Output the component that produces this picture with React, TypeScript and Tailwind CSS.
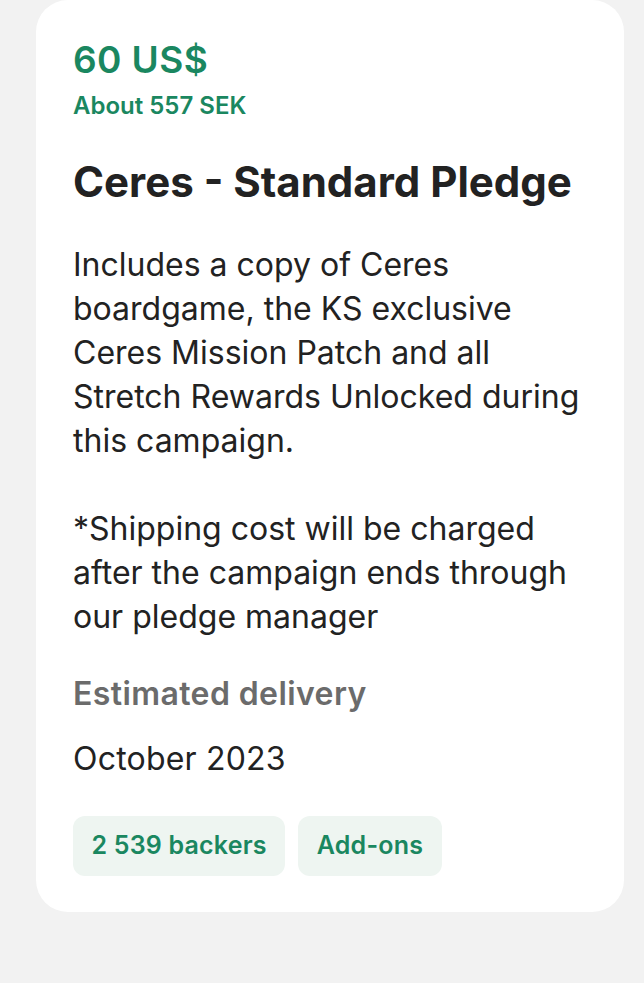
import React from "react";

const bodyLines1 = [
  "Includes a copy of Ceres",
  "boardgame, the KS exclusive",
  "Ceres Mission Patch and all",
  "Stretch Rewards Unlocked during",
  "this campaign.",
];
const bodyLines2 = [
  "*Shipping cost will be charged",
  "after the campaign ends through",
  "our pledge manager",
];

export default function App() {
  return (
    <div
      className="min-h-[983px] w-full bg-[#f2f2f2]"
      style={{ fontFamily: "Inter, 'Noto Sans', sans-serif" }}
    >
      <div className="ml-[36px] mr-[20px] rounded-[32px] bg-white px-[37px] pb-[36px] pt-[38px]">
        <div className="text-[37px] font-semibold leading-[44px] tracking-[0.4px] text-[#1a8760]">
          60 US$
        </div>
        <div className="mt-[8.5px] text-[24px] font-semibold leading-[30px] text-[#1a8760]">
          About 557 SEK
        </div>
        <div className="mt-[36.5px] text-[42px] font-bold leading-[50px] text-[#222222]">
          Ceres - Standard Pledge
        </div>
        <div className="mt-[35.5px] text-[32px] leading-[44px] text-[#222222]">
          {bodyLines1.map((l) => (
            <div key={l} className="whitespace-nowrap">{l}</div>
          ))}
          <div className="h-[44px]" />
          {bodyLines2.map((l) => (
            <div key={l} className="whitespace-nowrap">{l}</div>
          ))}
        </div>
        <div className="mt-[33.5px] text-[32px] font-semibold leading-[44px] tracking-[0.4px] text-[#6b6b6b]">
          Estimated delivery
        </div>
        <div className="mt-[21px] text-[32px] leading-[44px] tracking-[0.2px] text-[#222222]">
          October 2023
        </div>
        <div className="mt-[35px] flex gap-[13px]">
          <div className="flex h-[60px] items-center rounded-[12px] bg-[#eef5f1] px-[18.5px] text-[25px] font-semibold tracking-[0.2px] text-[#1a8760]">
            2 539 backers
          </div>
          <div className="flex h-[60px] items-center rounded-[12px] bg-[#eef5f1] px-[18.5px] text-[25px] font-semibold tracking-[0.2px] text-[#1a8760]">
            Add-ons
          </div>
        </div>
      </div>
    </div>
  );
}
